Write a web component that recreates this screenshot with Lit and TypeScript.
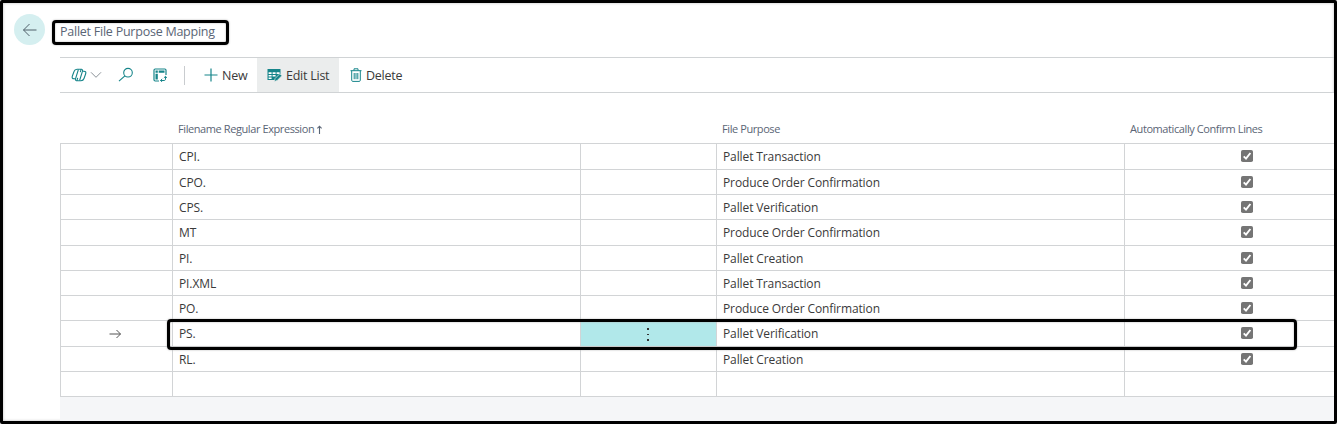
import { LitElement, html, css, svg } from "lit";
import { customElement } from "lit/decorators.js";
import { classMap } from "lit/directives/class-map.js";

interface Row {
  expression: string;
  purpose: string;
  tall?: boolean;
  selected?: boolean;
}

const ROWS: Row[] = [
  { expression: "CPI.", purpose: "Pallet Transaction", tall: true },
  { expression: "CPO.", purpose: "Produce Order Confirmation" },
  { expression: "CPS.", purpose: "Pallet Verification" },
  { expression: "MT", purpose: "Produce Order Confirmation", tall: true },
  { expression: "PI.", purpose: "Pallet Creation" },
  { expression: "PI.XML", purpose: "Pallet Transaction" },
  { expression: "PO.", purpose: "Produce Order Confirmation" },
  { expression: "PS.", purpose: "Pallet Verification", tall: true, selected: true },
  { expression: "RL.", purpose: "Pallet Creation" },
  { expression: "", purpose: "" },
];

const icon = (w: number, h: number, body: unknown) =>
  html`<svg width=${w} height=${h} viewBox="0 0 ${w} ${h}" fill="none" stroke="currentColor">${body}</svg>`;

const ICONS = {
  back: icon(16, 14, svg`<path d="M14.500 7H1.500M7.500 1 1.500 7l6 6" stroke-width="1"/>`),
  copilot: icon(16, 14, svg`<g stroke-width="1.100" stroke-linejoin="round"><path d="M9.300 4.200 10.100 1.300H6C4.300 1.300 3.500 2 3 3.500L1.300 8.200C.8 9.900 1.400 10.800 3 10.800h1.500"/><path d="M6.700 9.800 5.900 12.700H10c1.700 0 2.500-.7 3-2.200l1.700-4.700c.5-1.700-.1-2.600-1.700-2.600h-1.500"/><path d="M7.400 1.500 4.500 10.800c-.3 1.200.2 1.900 1.400 1.900M8.600 12.500l2.900-9.300c.3-1.200-.2-1.900-1.400-1.900"/></g>`),
  chevron: icon(12, 8, svg`<path d="M1 1.300 6 6.300l5-5" stroke-width="1"/>`),
  search: icon(16, 16, svg`<g stroke-width="1.100"><circle cx="10" cy="5.700" r="4.300"/><path d="M6.900 8.800 1 14.200"/></g>`),
  analyze: icon(14, 14, svg`<path d="M13 7V2.200C13 1.400 12.600 1 11.800 1H2.200C1.400 1 1 1.400 1 2.200v9.600c0 .8.400 1.200 1.200 1.200H6" stroke-width="1.200"/><path d="M2.500 2.500h2.300v2.300H2.500zM5.700 2.500h5.800v2.300H5.700zM2.500 5.700h2.300v5.800H2.500z" fill="currentColor" stroke="none"/><path d="M7.500 12.500H11c1 0 1.500-.5 1.500-1.500V8.500M9.200 10.900 7.500 12.500l1.700 1.400M10.900 9.900 12.500 8.300l1.400 1.600" stroke-width="1"/>`),
  plus: icon(14, 14, svg`<path d="M7 .5v13M.5 7h13" stroke-width="1.200"/>`),
  edit: icon(15, 14, svg`<path d="M.5 1h13v5l-5.500 6H.500z" fill="currentColor" stroke="none"/><path d="M1.600 4.300h3v1.600h-3zM5.600 4.300h3v1.600h-3zM9.600 4.300h3v1.600h-3zM1.600 7h3v1.500h-3zM5.600 7h3v1.500h-3zM1.600 9.500h3V11h-3z" fill="#fff" stroke="none"/><path d="m7.300 13.500.8-3 4.800-4.800 2 2L10.200 12.500z" fill="currentColor" stroke="#ebeded" stroke-width=".7"/>`),
  trash: icon(12, 14, svg`<g stroke-width="1"><path d="M.5 2.700h11M4 2.500V.8h4v1.700M1.700 2.700v9.600c0 .7.400 1.100 1.100 1.100h6.400c.7 0 1.100-.4 1.100-1.100V2.700M4.200 5v6.200M6 5v6.200M7.800 5v6.200"/></g>`),
  arrow: icon(12, 10, svg`<path d="M.5 5h11M7.500 1l4 4-4 4" stroke-width="1"/>`),
  sort: icon(5, 9, svg`<path d="M2.500 9V1M.4 3.300 2.500 1.200l2.100 2.100" stroke-width="1.100"/>`),
  check: icon(12, 12, svg`<rect width="12" height="12" rx="1.800" fill="#757575" stroke="none"/><path d="m2.700 6.300 2.300 2.300 4.400-5.600" stroke="#fff" stroke-width="1.900"/>`),
};

@customElement("app-root")
export class AppRoot extends LitElement {
  static styles = css`
    :host { display: block; font-family: "Open Sans", "Noto Sans", sans-serif; color: #3a3a3a; }
    * { box-sizing: border-box; }
    svg { display: block; flex: none; }
    .page { position: relative; width: 1337px; height: 424px; background: #fff; border: 3px solid #000; border-radius: 2px; overflow: hidden; display: flex; flex-direction: column; white-space: nowrap; box-shadow: inset 0 0 3px #bbb; }
    .head { display: flex; align-items: flex-start; height: 54px; flex: none; padding: 11px 0 0 11px; }
    .back { width: 31px; height: 31px; border-radius: 50%; background: #d5eff0; color: #50606a; display: grid; place-items: center; }
    .title { margin: 6px 0 0 7px; width: 177px; height: 25px; border: 3px solid #000; border-radius: 4px; padding-left: 5px; line-height: 17px; font-size: 12.500px; letter-spacing: -0.240px; color: #5a6575; box-shadow: 0 0 2px #aaa, inset 0 0 2px #aaa; }
    .toolbar { margin-left: 57px; height: 36px; flex: none; border-top: 1px solid #d0d3d5; border-bottom: 1px solid #d0d3d5; display: flex; align-items: center; color: #16858a; font-size: 12.500px; letter-spacing: -0.250px; }
    .toolbar span { color: #3a3a3a; }
    .cop { display: flex; align-items: center; gap: 3px; padding-left: 11px; }
    .chev { color: #8b9298; }
    .find { margin-left: 16px; }
    .ana { margin-left: 19px; }
    .sep { width: 1px; height: 19px; background: #c9cccf; margin-left: 17px; }
    .btn { display: flex; align-items: center; gap: 4px; height: 34px; }
    .new { margin-left: 19px; width: 44px; }
    .edit { margin-left: 9px; width: 82px; padding-left: 10px; background: #ebeded; }
    .del { margin-left: 11px; }
    .grid { margin-left: 57px; flex: 1; background: #f5f6f8; }
    .line { display: grid; grid-template-columns: 112px 408px 136px 408px 1fr; }
    .labels { height: 50px; background: #fff; font-size: 11px; letter-spacing: -0.410px; color: #5a6575; line-height: 16px; padding-top: 22px; }
    .labels div { padding-left: 6px; display: flex; align-items: center; gap: 3px; }
    .row { height: 25px; background: #fff; font-size: 12px; letter-spacing: -0.110px; line-height: 22px; }
    .row.tall { height: 26px; }
    .row > div { border-left: 1px solid #d2d4d6; border-top: 1px solid #d2d4d6; padding: 2px 0 0 6px; }
    .row > .mark { padding: 0 4px 0 0; display: grid; place-items: center; color: #555; }
    .row > .confirm { padding: 6px 0 0 116px; }
    .row > .menu { padding: 0; display: grid; place-items: center; }
    .row.selected > .menu { background: #b1e8ea; padding: 2px 1px 0 0; }
    .dots { display: grid; gap: 4px; }
    .dots i { width: 1.500px; height: 1.500px; background: #333; }
    .foot { border-top: 1px solid #d2d4d6; }
    .outline { position: absolute; left: 164px; top: 316px; width: 1130px; height: 31px; border: 3px solid #000; border-radius: 4px; box-shadow: 0 0 2px #aaa, inset 0 0 2px #aaa; }
  `;

  private renderRow(r: Row) {
    return html`<div class=${classMap({ line: true, row: true, tall: !!r.tall, selected: !!r.selected })}>
      <div class="mark">${r.selected ? ICONS.arrow : null}</div>
      <div>${r.expression}</div>
      <div class="menu">${r.selected ? html`<span class="dots"><i></i><i></i><i></i></span>` : null}</div>
      <div>${r.purpose}</div>
      <div class="confirm">${r.purpose ? ICONS.check : null}</div>
    </div>`;
  }

  render() {
    return html`<div class="page">
      <div class="head"><div class="back">${ICONS.back}</div><div class="title">Pallet File Purpose Mapping</div></div>
      <div class="toolbar">
        <div class="cop">${ICONS.copilot}<div class="chev">${ICONS.chevron}</div></div>
        <div class="find">${ICONS.search}</div>
        <div class="ana">${ICONS.analyze}</div>
        <div class="sep"></div>
        <div class="btn new">${ICONS.plus}<span>New</span></div>
        <div class="btn edit">${ICONS.edit}<span>Edit List</span></div>
        <div class="btn del">${ICONS.trash}<span>Delete</span></div>
      </div>
      <div class="grid">
        <div class="line labels"><div></div><div>Filename Regular Expression ${ICONS.sort}</div><div></div><div>File Purpose</div><div>Automatically Confirm Lines</div></div>
        ${ROWS.map((r) => this.renderRow(r))}
        <div class="foot"></div>
      </div>
      <div class="outline"></div>
    </div>`;
  }
}
